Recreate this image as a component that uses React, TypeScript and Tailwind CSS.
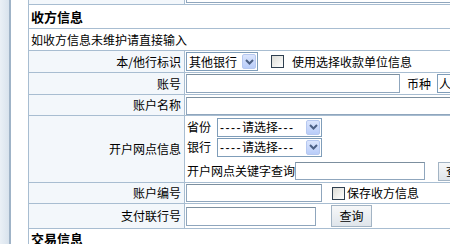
import React from 'react';

const cell = 'border-[#a8bdd1]';

const Chevron = () => (
  <svg width="9" height="6" viewBox="0 0 9 6">
    <path d="M1 1 L4.5 4.5 L8 1" fill="none" stroke="#4d6185" strokeWidth="2" />
  </svg>
);

const FakeSelect: React.FC<{ width: string; label: React.ReactNode }> = ({ width, label }) => (
  <div className={`${width} flex h-[19px] shrink-0 items-center border border-[#7f9db9] bg-white`}>
    <span className="flex-1 overflow-hidden whitespace-nowrap pl-[2px] leading-[17px]">{label}</span>
    <div className="mr-[1px] flex h-[15px] w-[14px] items-center justify-center rounded-[2px] border border-[#b6c8f0] bg-gradient-to-b from-[#dbe5fd] to-[#b9cdf9]">
      <Chevron />
    </div>
  </div>
);

const Dashes: React.FC<{ n: string }> = ({ n }) => (
  <span className="font-['Liberation_Sans',sans-serif] tracking-[1.5px]">{n}</span>
);

const Pick = () => (
  <span>
    <Dashes n="----" />请选择<Dashes n="---" />
  </span>
);

const Box = () => (
  <div className="h-[13px] w-[13px] shrink-0 border border-[#2f3f4f] bg-gradient-to-br from-[#dcdcd6] to-white" />
);

const Field: React.FC<{ className: string }> = ({ className }) => (
  <div className={`${className} shrink-0 border border-[#8fa6bd] border-t-[#7c8f9f] bg-white`} />
);

const Row: React.FC<{ label: string; h: string; children: React.ReactNode }> = ({ label, h, children }) => (
  <div className={`flex ${h} border-b ${cell}`}>
    <div className={`flex w-[156px] shrink-0 items-center justify-end border-r ${cell} bg-[#f3f7fb] pr-[3px]`}>
      {label}
    </div>
    <div className="flex min-w-0 flex-1 flex-col justify-center pl-[1px]">{children}</div>
  </div>
);

export default function App() {
  return (
    <div className="flex h-[244px] w-[450px] overflow-hidden bg-white font-['Noto_Sans_CJK_SC','Liberation_Sans',sans-serif] text-[12px] leading-[14px] text-black">
      <div className="w-[9px] shrink-0 bg-gradient-to-r from-[#eaf0f6] to-[#d9e3ed]" />
      <div className="w-[2px] shrink-0 bg-[#9fb3c7]" />
      <div className="flex-1 pl-[17px]">
        <div className={`w-[640px] border-l ${cell}`}>
          <div className={`flex h-[5px] border-b ${cell}`}>
            <div className={`w-[156px] shrink-0 border-r ${cell} bg-[#f3f7fb]`} />
            <div className="h-[3px] w-[400px] ml-[1px] border-b border-l border-[#8fa6bd]" />
          </div>

          <div className={`flex h-[24px] items-center border-b ${cell} pl-[2px] text-[13px] font-bold`}>
            收方信息
          </div>
          <div className={`flex h-[22px] items-center border-b ${cell} pl-[2px]`}>
            如收方信息未维护请直接输入
          </div>

          <Row label="本/他行标识" h="h-[22px]">
            <div className="flex items-center">
              <FakeSelect width="w-[72px]" label="其他银行" />
              <div className="ml-[13px]">
                <Box />
              </div>
              <span className="ml-[8px]">使用选择收款单位信息</span>
            </div>
          </Row>

          <Row label="账号" h="h-[22px]">
            <div className="flex items-center">
              <Field className="h-[19px] w-[214px]" />
              <span className="ml-[7px]">币种</span>
              <div className="ml-[6px] flex h-[19px] w-[80px] items-center border border-[#7f9db9] pl-[1px]">人民币</div>
            </div>
          </Row>

          <Row label="账户名称" h="h-[21px]">
            <div className="flex items-center pt-[1px]">
              <Field className="h-[18px] w-[400px]" />
            </div>
          </Row>

          <Row label="开户网点信息" h="h-[67px]">
            <div className="flex flex-col gap-[1px] pl-[1px]">
              <div className="flex items-center">
                <span>省份</span>
                <div className="ml-[6px]">
                  <FakeSelect width="w-[105px]" label={<Pick />} />
                </div>
              </div>
              <div className="flex items-center">
                <span>银行</span>
                <div className="ml-[6px]">
                  <FakeSelect width="w-[105px]" label={<Pick />} />
                </div>
              </div>
              <div className="mt-[4px] flex items-center">
                <span>开户网点关键字查询</span>
                <Field className="h-[18px] w-[130px]" />
                <div className="ml-[13px] flex h-[19px] w-[40px] shrink-0 items-center justify-center border border-[#a3b4c4] bg-gradient-to-b from-[#f7f8f9] to-[#dfe5eb]">
                  查询
                </div>
              </div>
            </div>
          </Row>

          <Row label="账户编号" h="h-[21px]">
            <div className="flex items-center">
              <Field className="h-[18px] w-[136px]" />
              <div className="ml-[10px]">
                <Box />
              </div>
              <span className="ml-[2px]">保存收方信息</span>
            </div>
          </Row>

          <Row label="支付联行号" h="h-[25px]">
            <div className="flex items-center">
              <Field className="h-[19px] w-[130px]" />
              <div className="ml-[15px] flex h-[22px] w-[41px] shrink-0 items-center justify-center border border-[#a3b4c4] bg-gradient-to-b from-[#f7f8f9] to-[#dfe5eb]">
                查询
              </div>
            </div>
          </Row>

          <div className="flex h-[20px] items-center pl-[2px] text-[13px] font-bold">交易信息</div>
        </div>
      </div>
    </div>
  );
}
